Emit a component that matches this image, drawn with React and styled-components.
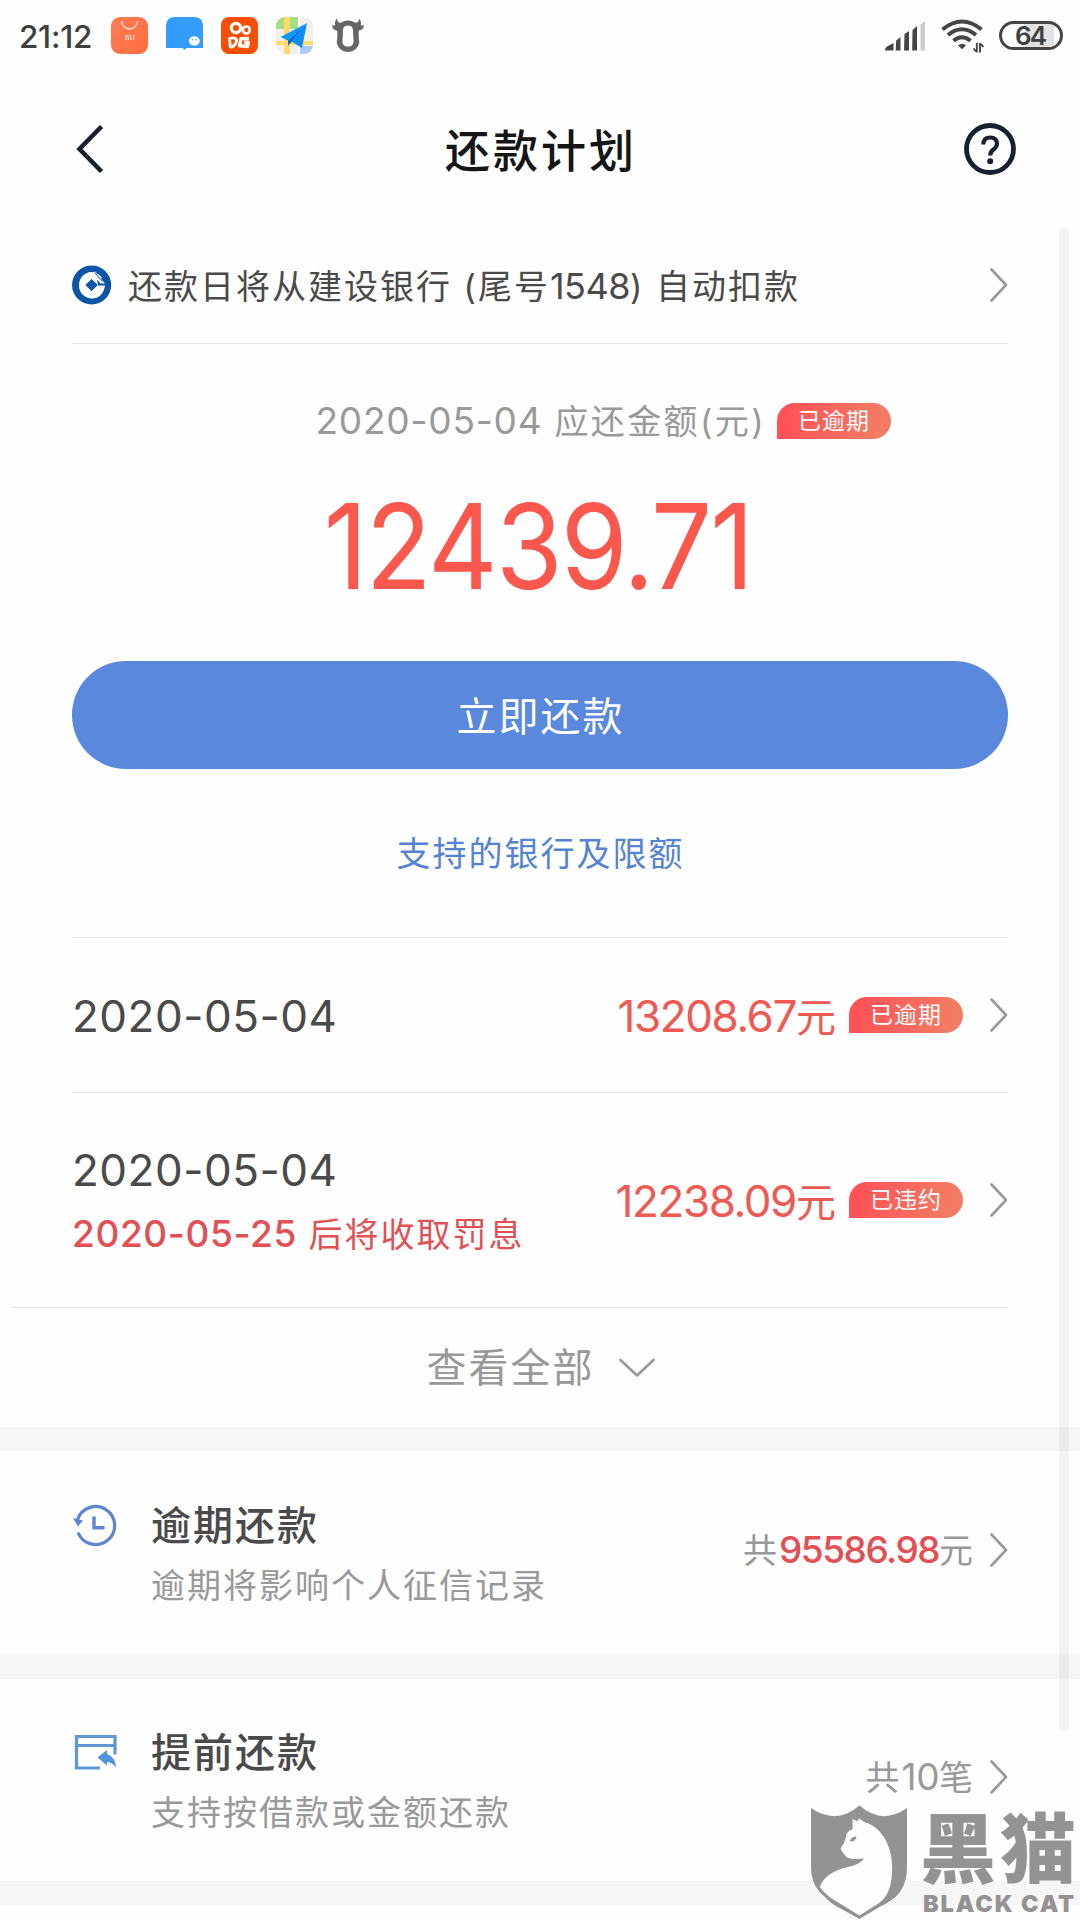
import React from "react";
import styled, { createGlobalStyle } from "styled-components";

const GlobalStyle = createGlobalStyle`
  * { box-sizing: border-box; }
  body {
    margin: 0;
    background: #fefefe;
    font-family: Inter, "Noto Sans CJK SC", sans-serif;
    color: #4a4a4a;
  }
`;

const Screen = styled.div`
  position: relative;
  width: 1080px;
  height: 1920px;
  overflow: hidden;
  background: #fefefe;
`;

const StatusBar = styled.header`
  display: flex;
  justify-content: space-between;
  align-items: center;
  height: 71px;
  padding: 0 17px 0 19px;
`;

const StatusGroup = styled.div`
  display: flex;
  align-items: center;
  gap: ${(p) => p.$gap}px;
`;

const Clock = styled.span`
  width: 74px;
  padding-top: 2px;
  font-size: 31.5px;
  font-weight: 500;
  line-height: 40px;
  letter-spacing: -0.3px;
  color: #3f3f3f;
  white-space: nowrap;
`;

const Battery = styled.div`
  display: flex;
  align-items: center;
  justify-content: center;
  width: 64px;
  height: 29px;
  padding: 1px 2px 0 0;
  border: 3px solid #454545;
  border-radius: 15px;
  background: linear-gradient(90deg, #fefefe 40%, #e2e2e2 40%, #e2e2e2 90%, #fefefe 90%);
  font-size: 26px;
  font-weight: 600;
  line-height: 22px;
  letter-spacing: -2px;
  color: #3f3f3f;
`;

const TitleBar = styled.div`
  display: grid;
  grid-template-columns: 52px 1fr 52px;
  align-items: center;
  height: 156px;
  padding: 0 64px;
`;

const Title = styled.h1`
  margin: 0 0 0 2px;
  padding-top: 5px;
  text-align: center;
  font-size: 45px;
  line-height: 60px;
  font-weight: 500;
  letter-spacing: 3px;
  color: #151515;
`;

const Panel = styled.section`
  display: flex;
  flex-direction: column;
  padding: 0 72px;
`;

const Divider = styled.div`
  height: 1px;
  margin-left: ${(p) => (p.$wide ? "-60px" : "0")};
  background: #e2e2e2;
`;

const Row = styled.div`
  display: flex;
  align-items: center;
  justify-content: space-between;
  height: ${(p) => p.$h}px;
`;

const BankInfo = styled.div`
  display: flex;
  align-items: center;
  gap: 16px;
`;

const Text = styled.span`
  padding-top: ${(p) => p.$drop || 0}px;
  font-size: 34px;
  line-height: 44px;
  letter-spacing: 2px;
  white-space: nowrap;
  color: ${(p) => p.$color || "#4a4a4a"};
`;

const Num = styled.span`
  font-size: ${(p) => p.$size || 37}px;
  letter-spacing: ${(p) => p.$spacing || 0}px;
  color: ${(p) => p.$color || "inherit"};
  font-weight: ${(p) => p.$weight || 400};
`;

const Due = styled.div`
  display: flex;
  align-items: center;
  justify-content: flex-end;
  gap: 11px;
  height: 154px;
  padding: 0 117px 0 0;
  margin-bottom: -27px;
`;

const DueLabel = styled(Text)`
  letter-spacing: 2.4px;
`;

const Badge = styled.span`
  display: flex;
  align-items: center;
  justify-content: center;
  width: 114px;
  height: 36px;
  border-radius: 18px 18px 18px 0;
  background: linear-gradient(100deg, #ff5358 10%, #f27c63 90%);
  color: #fff;
  font-size: 23px;
  line-height: 36px;
  letter-spacing: 1px;
`;

const Total = styled.div`
  height: 190px;
  margin-left: -4px;
  text-align: center;
  font-size: 118px;
  line-height: 151px;
  letter-spacing: -2px;
  color: #fb584d;
  transform: scaleX(0.915);
`;

const PayButton = styled.button`
  height: 108px;
  padding: 3px 0 0 1px;
  border: 0;
  border-radius: 54px;
  background: #5988dd;
  color: #fff;
  font: 400 40px/105px Inter, "Noto Sans CJK SC", sans-serif;
  letter-spacing: 2px;
`;

const BankLink = styled.div`
  height: 168px;
  padding: 1px 0 0 1px;
  text-align: center;
  font-size: 34px;
  line-height: 168px;
  letter-spacing: 2px;
  color: #5583d3;
`;

const Stack = styled.div`
  display: flex;
  flex-direction: column;
  gap: ${(p) => p.$gap}px;
  padding-top: 2px;
`;

const DateText = styled.span`
  font-size: 44px;
  line-height: 48px;
  letter-spacing: 0.5px;
  white-space: nowrap;
`;

const Trailing = styled.div`
  display: flex;
  align-items: center;
`;

const Amount = styled.span`
  margin-right: 13px;
  padding-top: 3px;
  font-size: 40px;
  line-height: 48px;
  color: #ee5a52;
  white-space: nowrap;
`;

const Gap = styled.div`
  width: ${(p) => p.$w}px;
`;

const ViewAll = styled.div`
  display: flex;
  align-items: center;
  justify-content: center;
  gap: 24px;
  height: 119px;
  padding: 1px 0 0 1px;
  font-size: 40px;
  line-height: 50px;
  letter-spacing: 2px;
  color: #999;
`;

const Band = styled.div`
  height: ${(p) => p.$h || 24}px;
  background: #f6f6f6;
`;

const Entry = styled.section`
  display: grid;
  grid-template-columns: 79px 1fr auto;
  height: ${(p) => p.$h}px;
  padding: 0 72px;
`;

const EntryIcon = styled.div`
  padding-top: 53px;
`;

const EntryText = styled.div`
  display: flex;
  flex-direction: column;
  padding-top: ${(p) => p.$top}px;
`;

const EntryTitle = styled.h2`
  margin: 0;
  height: 50px;
  font-size: 40px;
  line-height: 50px;
  font-weight: 500;
  letter-spacing: 2px;
`;

const EntryNote = styled.p`
  margin: 13px 0 0;
  font-size: 34px;
  line-height: 44px;
  letter-spacing: 2px;
  color: #999;
`;

const EntryValue = styled.div`
  display: flex;
  align-items: center;
  gap: 15px;
  height: ${(p) => p.$h}px;
`;

const ScrollThumb = styled.div`
  position: absolute;
  left: 1059px;
  top: 227px;
  width: 10px;
  height: 1504px;
  border-radius: 5px;
  background: rgba(0, 0, 0, 0.045);
`;

const Watermark = styled.div`
  position: absolute;
  right: 0;
  bottom: 0;
  display: flex;
  gap: 12px;
  width: 269px;
  height: 115px;
  color: #949293;
`;

const Brand = styled.div`
  display: flex;
  flex-direction: column;
  padding-top: 6px;
`;

const BrandName = styled.div`
  height: 76px;
  font-size: 76px;
  line-height: 76px;
  font-weight: 900;
  letter-spacing: 4px;
  white-space: nowrap;
`;

const BrandLatin = styled.div`
  margin: 5px 0 0 3px;
  font-size: 23.5px;
  line-height: 24px;
  font-weight: 900;
  letter-spacing: 1.9px;
  white-space: nowrap;
`;

const Arrow = () => (
  <svg width="18" height="34" viewBox="0 0 18 34" fill="none" stroke="#999" strokeWidth="2.6">
    <path d="M1.5 1.5 16 17 1.5 32.5" strokeLinecap="round" strokeLinejoin="round" />
  </svg>
);

const StoreIcon = () => (
  <svg width="37" height="37" viewBox="0 0 37 37">
    <defs>
      <linearGradient id="store" x1="0" y1="0" x2="1" y2="1">
        <stop offset="0" stopColor="#ff7b54" />
        <stop offset="1" stopColor="#ff6e3f" />
      </linearGradient>
    </defs>
    <rect width="37" height="37" rx="9" fill="url(#store)" />
    <path d="M10.500 4a8 8 0 0 0 16 0" fill="none" stroke="#ffe9df" strokeWidth="1.300" />
    <path d="M15 23v-4.500h3.300q1.500 0 1.500 1.500v3M17.400 20.300V23M22.600 18.500V23" fill="none" stroke="#ffe2d5" strokeWidth="1.200" />
  </svg>
);

const MessageIcon = () => (
  <svg width="37" height="37" viewBox="0 0 37 37">
    <path d="M0 31V9q0-9 9-9h19q9 0 9 9v22H20.500L18.500 33 16.500 31Z" fill="#329dfa" />
    <ellipse cx="28.300" cy="24" rx="5.500" ry="4.700" fill="#fff" />
    <circle cx="26.400" cy="22.800" r=".8" fill="#329dfa" />
    <circle cx="30.200" cy="22.800" r=".8" fill="#329dfa" />
  </svg>
);

const VideoIcon = () => (
  <svg width="37" height="37" viewBox="0 0 37 37" fill="none" stroke="#fff" strokeLinejoin="round">
    <rect width="37" height="37" rx="8" fill="#fb4e05" stroke="none" />
    <circle cx="15" cy="11" r="4.600" strokeWidth="3.200" />
    <circle cx="25.300" cy="13" r="3.500" strokeWidth="2.700" />
    <path d="M8.500 21.500q5.500-1.500 7 1.200.6 4.800-5 7.500l-1.200-.4Z" strokeWidth="2.800" />
    <path d="M28 21.500l-8 .3-1.500 7 8 .7.800-4h-4" strokeWidth="3.400" />
  </svg>
);

const MapIcon = () => (
  <svg width="37" height="37" viewBox="0 0 37 37">
    <defs>
      <clipPath id="map"><rect width="37" height="37" rx="9" /></clipPath>
    </defs>
    <g clipPath="url(#map)">
      <path d="M0 0h37v37H0Z" fill="#f1f0ed" />
      <path d="M0 0h22v12H0Z" fill="#a5df83" />
      <path d="M23 29h14v8H23Z" fill="#a9caff" />
      <path d="M8 0h6v37H8ZM0 24h37v4H0Z" fill="#ffd86e" />
      <path d="M22 0h2v37h-2Z" fill="#fff" />
    </g>
    <path d="M31 6 4.500 20l7.500 3.500Z" fill="#0d9aff" />
    <path d="M31 6 12 23.500v5l4-4Z" fill="#0668cf" />
    <path d="M31 6 15.500 24.500 26 31Z" fill="#0a8df8" />
  </svg>
);

const BullIcon = () => (
  <svg width="34" height="37" viewBox="0 0 34 37">
    <path
      d="M6 1.500Q6.500 6.500 10 5.500q7-4 14 0 4 1 4-4 3 3.500 1.700 7l3.300-.3q-.5 5-5 5.300-.8 4 .3 12Q26.500 34.500 17 35q-9.500-.5-11.300-9.500 1.100-8 .3-12-4.500-.3-5-5.300l3.300.3Q3 5 6 1.500Z"
      fill="#666"
    />
    <path d="M17 8.500c4.500 0 5.300 3 5 7l.6 8c0 4-1.600 6-5.600 6s-5.600-2-5.600-6l.6-8C11.700 11.500 12.500 8.500 17 8.500Z" fill="#fefefe" />
  </svg>
);

const SignalIcon = () => (
  <svg width="41" height="30" viewBox="0 0 41 30" fill="#454545">
    <path d="M0 29.500q0-3 3-4.500l5.500-3v7.500ZM11.200 19.500 15.500 16v13.500h-4.800ZM19.500 13 24 10v19.500h-5ZM27.500 9 32 5v24.500h-4.800Z" />
    <path d="M35.500 3.500 40 0v29.500h-4.500Z" fill="#ccc" />
  </svg>
);

const WifiIcon = () => (
  <svg width="43" height="34" viewBox="0 0 43 34" fill="none" stroke="#454545" strokeWidth="4">
    <path d="M1.500 10.500q19.500-16 39 0" />
    <path d="M7 16q14-11.500 28 0" />
    <path d="M12.500 21.700q8.500-7 17 0" />
    <path d="M17 26.500q4-3.500 8 0L21 30.300Z" fill="#454545" stroke="none" />
    <path d="M35.800 24v9.500M32.500 29.500l2.500 3M39 33.500V24M42.300 28l-2.500-3" strokeWidth="1.900" />
  </svg>
);

const BackIcon = () => (
  <svg width="52" height="52" viewBox="0 0 52 52" fill="none" stroke="#17202e" strokeWidth="4.600">
    <path d="M37.500 3.500 15.500 26l22 22.500" />
  </svg>
);

const HelpIcon = () => (
  <svg width="52" height="52" viewBox="0 0 52 52" fill="none" stroke="#17202e">
    <circle cx="26" cy="26" r="23.500" strokeWidth="4.800" />
    <path d="M19.300 21.500q.2-7 6.900-7 6.800.1 6.800 6.300 0 3-3.300 5.500-3.500 2.500-3.500 6.300" strokeWidth="4.200" />
    <circle cx="26.200" cy="38.300" r="3" fill="#17202e" stroke="none" />
  </svg>
);

const BankIcon = () => (
  <svg width="40" height="40" viewBox="0 0 40 40">
    <circle cx="19.600" cy="20" r="19.600" fill="#0d55a6" />
    <path
      d="M20 7C11.500 7 7 13.500 7 20.500 7 28 13 33.500 20 33.500c6.500 0 12-4.500 13-13H26l-1-6 5-1.500C27.500 9.500 24 7 20 7Z"
      fill="#fff"
    />
    <path d="m19.600 13.900 6.200 6.200-6.200 6.200-6.200-6.200Z" fill="#0d55a6" />
    <path d="m19.500 8 9 10.500h4.500L23 6.500Z" fill="#fff" />
    <path d="m22.800 7.500 7.500 9" stroke="#0d55a6" strokeWidth="1" />
  </svg>
);

const HistoryIcon = () => (
  <svg width="46" height="44" viewBox="0 0 46 44" fill="none" stroke="#5f84d3" strokeWidth="3.200">
    <path d="M5.500 16A19 19 0 1 1 6 28.500" />
    <path d="m1 14 10 2.500-5 6Z" fill="#5f84d3" stroke="none" />
    <path d="M22 12.500v11.200h10.500" strokeWidth="3.400" />
  </svg>
);

const CardIcon = () => (
  <svg width="46" height="44" viewBox="0 0 46 44" fill="none" stroke="#5f97d2" strokeWidth="3.200">
    <path d="M43 22.500V4.500H4.500v31.500H28" />
    <path d="M4.500 13.500H43" />
    <path d="m25.500 25.500 9.500-7.500v4q8.500 3 9 13.500-4-5.500-9-5.500v3.500Z" fill="#4f94d8" stroke="none" />
  </svg>
);

const ShieldCat = () => (
  <svg width="98" height="115" viewBox="0 0 98 115">
    <path d="M0 2.500Q26 20 49 0q23 20 48 2.500V62q0 22-15 33-7 5-12 7L49 114.500 28 103q-9-5-13-10Q0 82 0 62Z" fill="#949293" />
    <path
      d="M42 13.500 47 16 48.500 13 54 16.500C73 22 82 43 82 62c0 16-3 30-14 37L49 111 25 96.500q-9-5-16-14 4-15 30-21 11-2 14.500-8-10 1-16-.5-6-5-7.500-10 4-5 5-10 .5-7 7-9Z"
      fill="#fefefe"
    />
    <path d="M39.500 36q1-4 6-4.500-.5 4.500-6 4.500ZM43.500 32v4" fill="#949293" stroke="#949293" strokeWidth=".8" />
  </svg>
);

const PlanRow = ({ height, date, note, amount, badge }) => (
  <Row $h={height}>
    <Stack $gap={18}>
      <DateText>{date}</DateText>
      {note}
    </Stack>
    <Trailing>
      <Amount>
        <Num $size={44} $spacing={-1.4}>{amount}</Num>元
      </Amount>
      <Badge>{badge}</Badge>
      <Gap $w={27} />
      <Arrow />
    </Trailing>
  </Row>
);

export default function App() {
  return (
    <Screen>
      <GlobalStyle />
      <StatusBar>
        <StatusGroup $gap={18}>
          <Clock>21:12</Clock>
          <StoreIcon />
          <MessageIcon />
          <VideoIcon />
          <MapIcon />
          <BullIcon />
        </StatusGroup>
        <StatusGroup $gap={15}>
          <SignalIcon />
          <WifiIcon />
          <Battery>64</Battery>
        </StatusGroup>
      </StatusBar>

      <TitleBar>
        <BackIcon />
        <Title>还款计划</Title>
        <HelpIcon />
      </TitleBar>

      <Panel>
        <Row $h={116}>
          <BankInfo>
            <BankIcon />
            <Text $drop={2}>还款日将从建设银行 (尾号<Num $size={36} $spacing={-0.5}>1548</Num>) 自动扣款</Text>
          </BankInfo>
          <Arrow />
        </Row>
        <Divider />
        <Due>
          <DueLabel $color="#999"><Num $spacing={0.8}>2020-05-04</Num> 应还金额(元)</DueLabel>
          <Badge>已逾期</Badge>
        </Due>
        <Total>12439.71</Total>
        <PayButton>立即还款</PayButton>
        <BankLink>支持的银行及限额</BankLink>
        <Divider />
        <PlanRow height={154} date="2020-05-04" amount="13208.67" badge="已逾期" />
        <Divider />
        <PlanRow
          height={214}
          date="2020-05-04"
          amount="12238.09"
          badge="已违约"
          note={<Text $color="#e05054"><Num $spacing={0.6} $weight={500}>2020-05-25</Num> 后将收取罚息</Text>}
        />
        <Divider $wide />
        <ViewAll>
          查看全部
          <svg width="36" height="20" viewBox="0 0 36 20" fill="none" stroke="#999" strokeWidth="2.600">
            <path d="M1.500 2 18 17.500 34.500 2" strokeLinecap="round" strokeLinejoin="round" />
          </svg>
        </ViewAll>
      </Panel>

      <Band />
      <Entry $h={203}>
        <EntryIcon><HistoryIcon /></EntryIcon>
        <EntryText $top={50}>
          <EntryTitle>逾期还款</EntryTitle>
          <EntryNote>逾期将影响个人征信记录</EntryNote>
        </EntryText>
        <EntryValue $h={198}>
          <Text $color="#999">共<Num $color="#e05054" $weight={500} $spacing={-1.5}>95586.98</Num>元</Text>
          <Arrow />
        </EntryValue>
      </Entry>
      <Band $h={25} />
      <Entry $h={202}>
        <EntryIcon><CardIcon /></EntryIcon>
        <EntryText $top={49}>
          <EntryTitle>提前还款</EntryTitle>
          <EntryNote>支持按借款或金额还款</EntryNote>
        </EntryText>
        <EntryValue $h={196}>
          <Text $color="#999">共<Num $spacing={-0.5}>10</Num>笔</Text>
          <Arrow />
        </EntryValue>
      </Entry>
      <Band />

      <ScrollThumb />
      <Watermark>
        <ShieldCat />
        <Brand>
          <BrandName>黑猫</BrandName>
          <BrandLatin>BLACK CAT</BrandLatin>
        </Brand>
      </Watermark>
    </Screen>
  );
}
